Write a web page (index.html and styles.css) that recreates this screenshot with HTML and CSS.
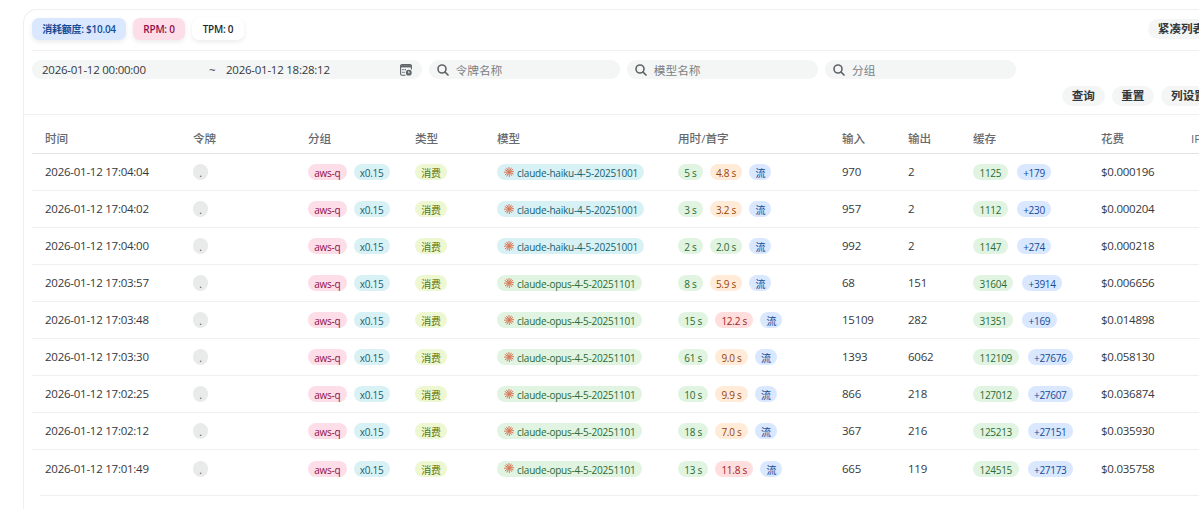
FILE: index.html
```html
<!DOCTYPE html>
<html lang="zh-CN">
<head>
    <meta charset="UTF-8">
    <meta name="viewport" content="width=device-width, initial-scale=1.0">
    <title>使用日志</title>
    <link rel="stylesheet" href="styles.css">
</head>
<body>
    <svg width="0" height="0" class="sprite">
        <symbol id="icon-search" viewBox="0 0 12 12">
            <circle cx="5" cy="5" r="4" fill="none" stroke="currentColor" stroke-width="1.6"/>
            <path d="M8 8l3 3" stroke="currentColor" stroke-width="1.7" stroke-linecap="round"/>
        </symbol>
        <symbol id="icon-model" viewBox="0 0 20 20">
            <path d="M10 10V.8M10 10l4.4-7.8M10 10l7.6-5M10 10l9.2-.8M10 10l8.4 3.8M10 10l5.4 7M10 10l.8 9.2M10 10l-4 8.2M10 10l-7.4 5.4M10 10l-9.2.4M10 10L2.2 5.4M10 10L5.4 2.4" fill="none" stroke="#d97757" stroke-width="2" stroke-linecap="round"/>
        </symbol>
    </svg>

    <div class="card">
        <!-- 统计信息 -->
        <div class="card-header">
            <div class="stats">
                <span class="stat stat-blue">消耗额度: $10.04</span>
                <span class="stat stat-pink">RPM: 0</span>
                <span class="stat stat-white">TPM: 0</span>
            </div>
            <button class="btn">紧凑列表</button>
        </div>

        <!-- 筛选条件 -->
        <div class="filters">
            <div class="field date-range">
                <span class="date-start">2026-01-12 00:00:00</span>
                <span class="date-sep">~</span>
                <span class="date-end">2026-01-12 18:28:12</span>
                <svg class="icon-calendar" viewBox="0 0 12 12">
                    <path d="M5.5 11.2H2A1.4 1.4 0 0 1 .6 9.8V2A1.4 1.4 0 0 1 2 .6h8A1.4 1.4 0 0 1 11.4 2v3.4" fill="none" stroke="currentColor" stroke-width="1.1"/>
                    <path d="M.6 1.2h10.8v2.2H.6z" fill="currentColor"/>
                    <path d="M2.3 5.6h1.3M4.6 5.6h1.3M2.3 8.3h1.3M4.4 8.3h.7" stroke="currentColor" stroke-width="1.2"/>
                    <circle cx="8.8" cy="8.7" r="2.9" fill="currentColor"/>
                    <path d="M8.6 7.1v1.8h1.3" fill="none" stroke="#f4f6f6" stroke-width=".8"/>
                </svg>
            </div>
            <div class="field search"><svg class="icon-search"><use href="#icon-search"/></svg><span>令牌名称</span></div>
            <div class="field search"><svg class="icon-search"><use href="#icon-search"/></svg><span>模型名称</span></div>
            <div class="field search"><svg class="icon-search"><use href="#icon-search"/></svg><span>分组</span></div>
        </div>
        <div class="actions">
            <button class="btn">查询</button>
            <button class="btn">重置</button>
            <button class="btn">列设置</button>
        </div>

        <!-- 日志表格 -->
        <div class="table-wrap">
            <table class="log-table">
                <thead>
                    <tr>
                        <th class="col-time">时间</th>
                        <th class="col-token">令牌</th>
                        <th class="col-group">分组</th>
                        <th class="col-type">类型</th>
                        <th class="col-model">模型</th>
                        <th class="col-use">用时/首字</th>
                        <th class="col-in">输入</th>
                        <th class="col-out">输出</th>
                        <th class="col-cache">缓存</th>
                        <th class="col-cost">花费</th>
                        <th class="col-ip">IP</th>
                    </tr>
                </thead>
                <tbody id="log-body"></tbody>
            </table>
        </div>
        <div class="card-footer"></div>
    </div>

    <script src="script.js"></script>
</body>
</html>
```

FILE: styles.css
```css
* {
    margin: 0;
    padding: 0;
    box-sizing: border-box;
}

body {
    font-family: "Open Sans", "Noto Sans CJK SC", sans-serif;
    font-size: 11.5px;
    letter-spacing: -0.25px;
    color: #35383c;
    background: #fff;
    height: 100vh;
    overflow: hidden;
}

.sprite {
    position: absolute;
}

.card {
    width: 1220px;
    height: 500px;
    margin: 9px 0 0 23px;
    border: 1px solid #efefef;
    border-bottom: none;
    border-radius: 14px 14px 0 0;
}

/* 顶部统计 */
.card-header {
    display: flex;
    justify-content: space-between;
    align-items: center;
    height: 41px;
    margin: 0 8px;
    padding-bottom: 2px;
    border-bottom: 1px solid #f0f0f0;
}

.card-header .btn {
    width: 66px;
    margin-right: 20px;
}

.stats {
    display: flex;
    gap: 7px;
}

.stat {
    height: 22px;
    line-height: 22px;
    border-radius: 7px;
    text-align: center;
    font-size: 10px;
    font-weight: 600;
    white-space: nowrap;
    box-shadow: 0 2px 5px rgba(0, 0, 0, 0.08);
}

.stat-blue {
    width: 94px;
    background: #d9e7ff;
    color: #134c97;
}

.stat-pink {
    width: 52px;
    background: #fddde8;
    color: #8f0e4c;
}

.stat-white {
    width: 52px;
    background: #fff;
    color: #25282b;
}

.btn {
    height: 20px;
    border: none;
    border-radius: 10px;
    background: #f4f6f6;
    color: #33373b;
    font-family: inherit;
    font-size: 11.6px;
    font-weight: 600;
    line-height: 20px;
    letter-spacing: 0;
    white-space: nowrap;
}

/* 筛选 */
.filters {
    display: flex;
    gap: 7px;
    padding: 9px 8px 0;
}

.field {
    display: flex;
    align-items: center;
    height: 19px;
    border-radius: 9px;
    background: #f4f6f6;
}

.date-range {
    width: 389.5px;
    padding: 0 10px;
}

.date-start {
    width: 167px;
}

.date-sep {
    width: 17px;
}

.icon-calendar {
    width: 12px;
    height: 12px;
    margin-left: auto;
    color: #5f6468;
}

.search {
    width: 191.3px;
    padding-left: 8px;
    gap: 7px;
    color: #7b7f83;
    font-size: 11.7px;
    letter-spacing: 0;
}

.icon-search {
    width: 12px;
    height: 12px;
    color: #5f6468;
}

.actions {
    display: flex;
    justify-content: flex-end;
    gap: 7px;
    height: 36px;
    padding: 7px 26px 0 0;
    border-bottom: 1px solid #f0f0f0;
}

.actions .btn {
    width: 42.5px;
}

.actions .btn:last-child {
    width: 55px;
}

/* 表格 */
.table-wrap {
    padding: 8px 8px 0;
}

.log-table {
    width: 1200px;
    table-layout: fixed;
    border-collapse: separate;
    border-spacing: 0;
    text-align: left;
}

.log-table th {
    height: 31px;
    padding-left: 13px;
    border-bottom: 1px solid #e3e4e4;
    color: #66696d;
    font-size: 11.6px;
    font-weight: 500;
    letter-spacing: 0;
    white-space: nowrap;
}

.log-table td {
    height: 37px;
    padding-left: 13px;
    border-bottom: 1px solid #efefef;
    white-space: nowrap;
}

.log-table td.text {
    padding-bottom: 1px;
}

.log-table tr:last-child td {
    border-bottom: none;
}

.col-time { width: 148px; }
.col-token { width: 115px; }
.col-group { width: 107px; }
.col-type { width: 82px; }
.col-model { width: 181px; }
.col-use { width: 164px; }
.col-in { width: 66px; }
.col-out { width: 65px; }
.col-cache { width: 128px; }
.col-cost { width: 90px; }

.tags {
    display: flex;
    gap: 7px;
}

.tags.cache {
    gap: 9px;
}

.tag {
    display: flex;
    align-items: center;
    height: 16px;
    padding: 2px 6.2px 0;
    border-radius: 8px;
    font-size: 10px;
    line-height: 14px;
}

.tags.cache .tag {
    padding: 2px 6.5px 0;
    letter-spacing: -0.3px;
}

.tags.model .tag {
    padding: 2px 6.5px 0 7px;
    letter-spacing: -0.22px;
}

.tag.grey { background: #e8ebea; color: #4a4d50; }
.tag.pink { background: #fddde8; color: #8f0e4c; }
.tag.cyan { background: #d8f1f5; color: #17606d; }
.tag.lime { background: #edf7d2; color: #557310; }
.tag.green { background: #e0f4e1; color: #2c6b35; }
.tag.orange { background: #ffebd8; color: #96460e; }
.tag.red { background: #ffdedd; color: #a01f24; }
.tag.blue { background: #d9e7ff; color: #134c97; }

.icon-model {
    width: 10px;
    height: 10px;
    margin: -3px 3px 0 0;
}

.card-footer {
    margin: 8px 0 0 16px;
    border-top: 1px solid #efefef;
}
```

FILE: script.js
```js
const logs = [
    { time: '17:04:04', model: 'claude-haiku-4-5-20251001', use: 5, first: '4.8', input: 970, output: 2, cache: 1125, write: 179, cost: '0.000196' },
    { time: '17:04:02', model: 'claude-haiku-4-5-20251001', use: 3, first: '3.2', input: 957, output: 2, cache: 1112, write: 230, cost: '0.000204' },
    { time: '17:04:00', model: 'claude-haiku-4-5-20251001', use: 2, first: '2.0', input: 992, output: 2, cache: 1147, write: 274, cost: '0.000218' },
    { time: '17:03:57', model: 'claude-opus-4-5-20251101', use: 8, first: '5.9', input: 68, output: 151, cache: 31604, write: 3914, cost: '0.006656' },
    { time: '17:03:48', model: 'claude-opus-4-5-20251101', use: 15, first: '12.2', input: 15109, output: 282, cache: 31351, write: 169, cost: '0.014898' },
    { time: '17:03:30', model: 'claude-opus-4-5-20251101', use: 61, first: '9.0', input: 1393, output: 6062, cache: 112109, write: 27676, cost: '0.058130' },
    { time: '17:02:25', model: 'claude-opus-4-5-20251101', use: 10, first: '9.9', input: 866, output: 218, cache: 127012, write: 27607, cost: '0.036874' },
    { time: '17:02:12', model: 'claude-opus-4-5-20251101', use: 18, first: '7.0', input: 367, output: 216, cache: 125213, write: 27151, cost: '0.035930' },
    { time: '17:01:49', model: 'claude-opus-4-5-20251101', use: 13, first: '11.8', input: 665, output: 119, cache: 124515, write: 27173, cost: '0.035758' }
];

// 首字耗时颜色
function firstColor(s) {
    if (s < 3) return 'green';
    if (s < 10) return 'orange';
    return 'red';
}

function tag(color, text) {
    return `<span class="tag ${color}">${text}</span>`;
}

function modelTag(name) {
    const color = name.includes('haiku') ? 'cyan' : 'green';
    return tag(color, `<svg class="icon-model"><use href="#icon-model"/></svg>${name}`);
}

document.getElementById('log-body').innerHTML = logs.map(log => `
    <tr>
        <td class="text">2026-01-12 ${log.time}</td>
        <td><div class="tags">${tag('grey', '.')}</div></td>
        <td><div class="tags">${tag('pink', 'aws-q')}${tag('cyan', 'x0.15')}</div></td>
        <td><div class="tags">${tag('lime', '消费')}</div></td>
        <td><div class="tags model">${modelTag(log.model)}</div></td>
        <td><div class="tags">${tag('green', log.use + ' s')}${tag(firstColor(parseFloat(log.first)), log.first + ' s')}${tag('blue', '流')}</div></td>
        <td class="text">${log.input}</td>
        <td class="text">${log.output}</td>
        <td><div class="tags cache">${tag('green', log.cache)}${tag('blue', '+' + log.write)}</div></td>
        <td class="text">$${log.cost}</td>
        <td></td>
    </tr>`).join('');
```
